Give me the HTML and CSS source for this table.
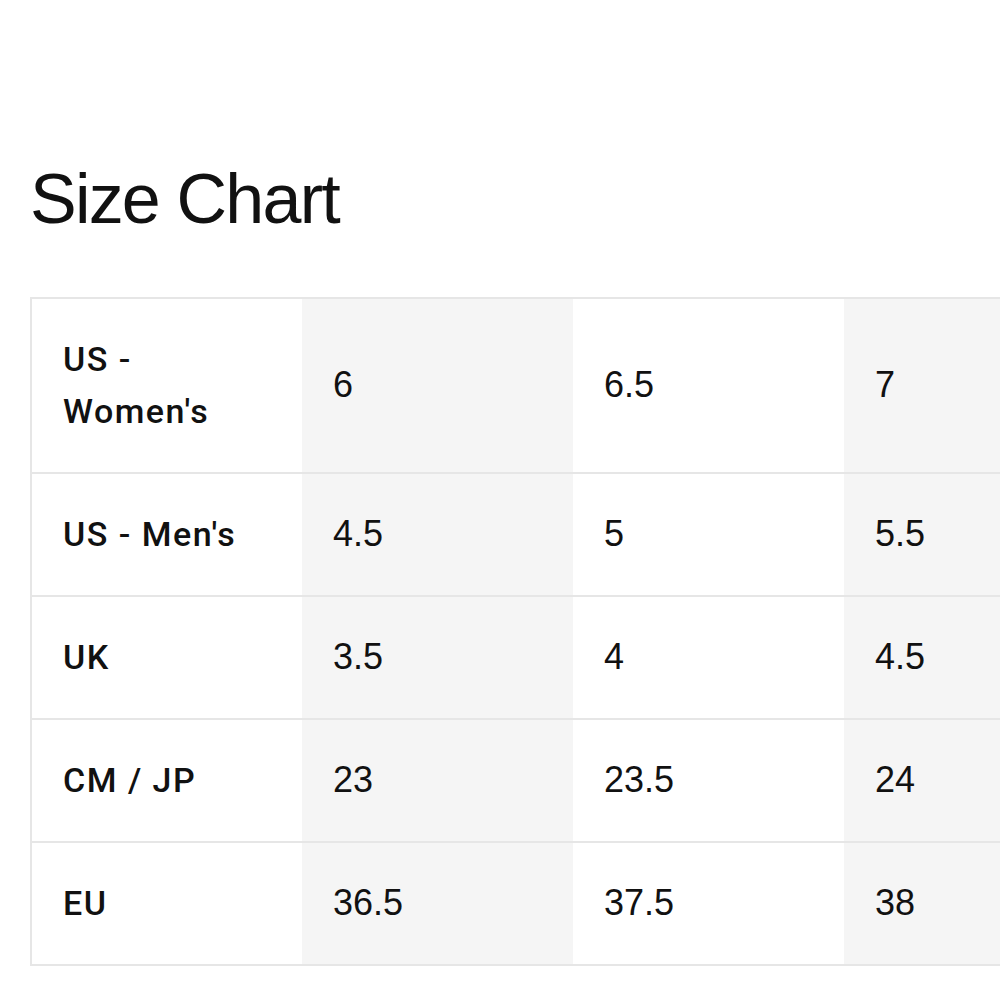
FILE: index.html
```html
<!DOCTYPE html>
<html lang="en">
<head>
<meta charset="utf-8">
<title>Size Chart</title>
<link rel="stylesheet" href="styles.css">
</head>
<body>
<main class="page">
  <h1 class="title">Size Chart</h1>
  <div class="table-wrap">
    <table class="chart">
      <colgroup>
        <col class="c-label"><col class="c-val"><col class="c-val"><col class="c-val">
      </colgroup>
      <tbody>
        <tr><th>US -<br>Women's</th><td>6</td><td>6.5</td><td>7</td></tr>
        <tr><th>US - Men's</th><td>4.5</td><td>5</td><td>5.5</td></tr>
        <tr><th>UK</th><td>3.5</td><td>4</td><td>4.5</td></tr>
        <tr><th>CM / JP</th><td>23</td><td>23.5</td><td>24</td></tr>
        <tr><th>EU</th><td>36.5</td><td>37.5</td><td>38</td></tr>
      </tbody>
    </table>
  </div>
</main>
</body>
</html>
```

FILE: styles.css
```css
html, body {
  margin: 0;
  padding: 0;
  background: #fff;
}
body {
  font-family: "Liberation Sans", Arial, sans-serif;
  color: #111;
}
.page {
  padding: 159px 0 0 30px;
}
.title {
  margin: 0;
  font-size: 70px;
  line-height: 80px;
  font-weight: 400;
  letter-spacing: -1.8px;
}
.table-wrap {
  margin-top: 58px;
  width: 970px;
  overflow: hidden;
}
.chart {
  border-collapse: separate;
  border-spacing: 0;
  table-layout: fixed;
  width: 1083px;
  border-top: 2px solid #e6e6e6;
  border-left: 2px solid #e6e6e6;
}
.c-label { width: 270px; }
.c-val { width: 271px; }
.chart th,
.chart td {
  padding: 34px 31px 35px;
  font-size: 36px;
  line-height: 52px;
  text-align: left;
  vertical-align: middle;
  border-bottom: 2px solid #e6e6e6;
}
.chart th {
  font-family: Roboto, "Liberation Sans", Arial, sans-serif;
  font-weight: 500;
  font-size: 34px;
  letter-spacing: 1.5px;
  background: #fff;
}
.chart td {
  font-weight: 400;
  background: #fff;
}
.chart td:nth-child(2),
.chart td:nth-child(4) {
  background: #f5f5f5;
}
```
